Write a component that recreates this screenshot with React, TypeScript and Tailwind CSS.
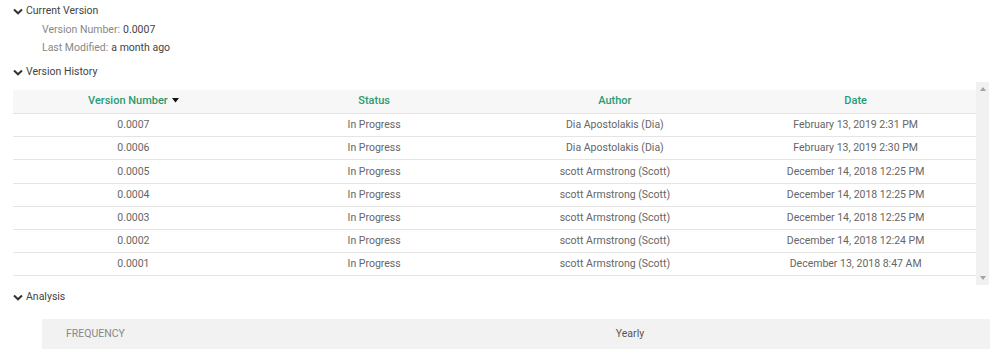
import React from 'react'

const rows = [
  { v: '0.0007', s: 'In Progress', a: 'Dia Apostolakis (Dia)', d: 'February 13, 2019 2:31 PM' },
  { v: '0.0006', s: 'In Progress', a: 'Dia Apostolakis (Dia)', d: 'February 13, 2019 2:30 PM' },
  { v: '0.0005', s: 'In Progress', a: 'scott Armstrong (Scott)', d: 'December 14, 2018 12:25 PM' },
  { v: '0.0004', s: 'In Progress', a: 'scott Armstrong (Scott)', d: 'December 14, 2018 12:25 PM' },
  { v: '0.0003', s: 'In Progress', a: 'scott Armstrong (Scott)', d: 'December 14, 2018 12:25 PM' },
  { v: '0.0002', s: 'In Progress', a: 'scott Armstrong (Scott)', d: 'December 14, 2018 12:24 PM' },
  { v: '0.0001', s: 'In Progress', a: 'scott Armstrong (Scott)', d: 'December 13, 2018 8:47 AM' },
]

// Small bold chevron used by section toggles
function Chevron() {
  return (
    <svg width="10" height="7" viewBox="0 0 10 7" className="mr-[3px]">
      <path d="M1 1.5 L5 5.3 L9 1.5" fill="none" stroke="#333" strokeWidth="2" />
    </svg>
  )
}

function SectionTitle({ label }: { label: string }) {
  return (
    <div className="flex items-center h-[18px] pl-[13px] text-[10.5px] text-[#444]">
      <Chevron />
      <span>{label}</span>
    </div>
  )
}

export default function App() {
  return (
    <div className="w-[1000px] h-[359px] bg-white overflow-hidden pt-[2px]" style={{ fontFamily: 'Roboto, "Liberation Sans", sans-serif' }}>
      <SectionTitle label="Current Version" />
      <div className="pl-[42px] text-[10.5px] mt-[1px]">
        <div className="h-[18px] flex items-center">
          <span className="text-[#888]">Version Number:</span>
          <span className="text-[#444] ml-[3px]">0.0007</span>
        </div>
        <div className="h-[18px] flex items-center">
          <span className="text-[#888]">Last Modified:</span>
          <span className="text-[#444] ml-[3px]">a month ago</span>
        </div>
      </div>
      <div className="mt-[6px]">
        <SectionTitle label="Version History" />
      </div>

      {/* Version history table with scrollbar */}
      <div className="flex mt-[1px] pl-[13px]">
        <div className="w-[963px] pt-[8px] text-[10.5px]">
          <div className="grid grid-cols-4 h-[24px] bg-[#f7f7f7] border-b border-[#e4e4e4] font-medium text-[11px] text-[#2b9a72]">
            <div className="flex items-center justify-center">
              Version Number
              <svg width="7" height="5" viewBox="0 0 7 5" className="ml-[4px] mb-[2px]">
                <path d="M0 0 H7 L3.5 4.5 Z" fill="#111" />
              </svg>
            </div>
            <div className="flex items-center justify-center">Status</div>
            <div className="flex items-center justify-center">Author</div>
            <div className="flex items-center justify-center">Date</div>
          </div>
          {rows.map((r) => (
            <div key={r.v} className="grid grid-cols-4 h-[23.2px] border-b border-[#e4e4e4] text-[#666]">
              <div className="flex items-center justify-center">{r.v}</div>
              <div className="flex items-center justify-center">{r.s}</div>
              <div className="flex items-center justify-center">{r.a}</div>
              <div className="flex items-center justify-center">{r.d}</div>
            </div>
          ))}
        </div>
        <div className="w-[13px] h-[203px] bg-[#f1f1f1] flex flex-col justify-between items-center py-[5px]">
          <svg width="6" height="4" viewBox="0 0 6 4">
            <path d="M0 4 L3 0 L6 4 Z" fill="#a3a3a3" />
          </svg>
          <svg width="6" height="4" viewBox="0 0 6 4">
            <path d="M0 0 L3 4 L6 0 Z" fill="#a3a3a3" />
          </svg>
        </div>
      </div>

      <div className="mt-[3px]">
        <SectionTitle label="Analysis" />
      </div>
      <div className="ml-[42px] mt-[13px] w-[948px] h-[30px] bg-[#f2f2f2] flex items-center text-[10.5px]">
        <div className="w-[228px] pl-[24px] text-[#888]">FREQUENCY</div>
        <div className="flex-1 text-center text-[#555]">Yearly</div>
      </div>
    </div>
  )
}
